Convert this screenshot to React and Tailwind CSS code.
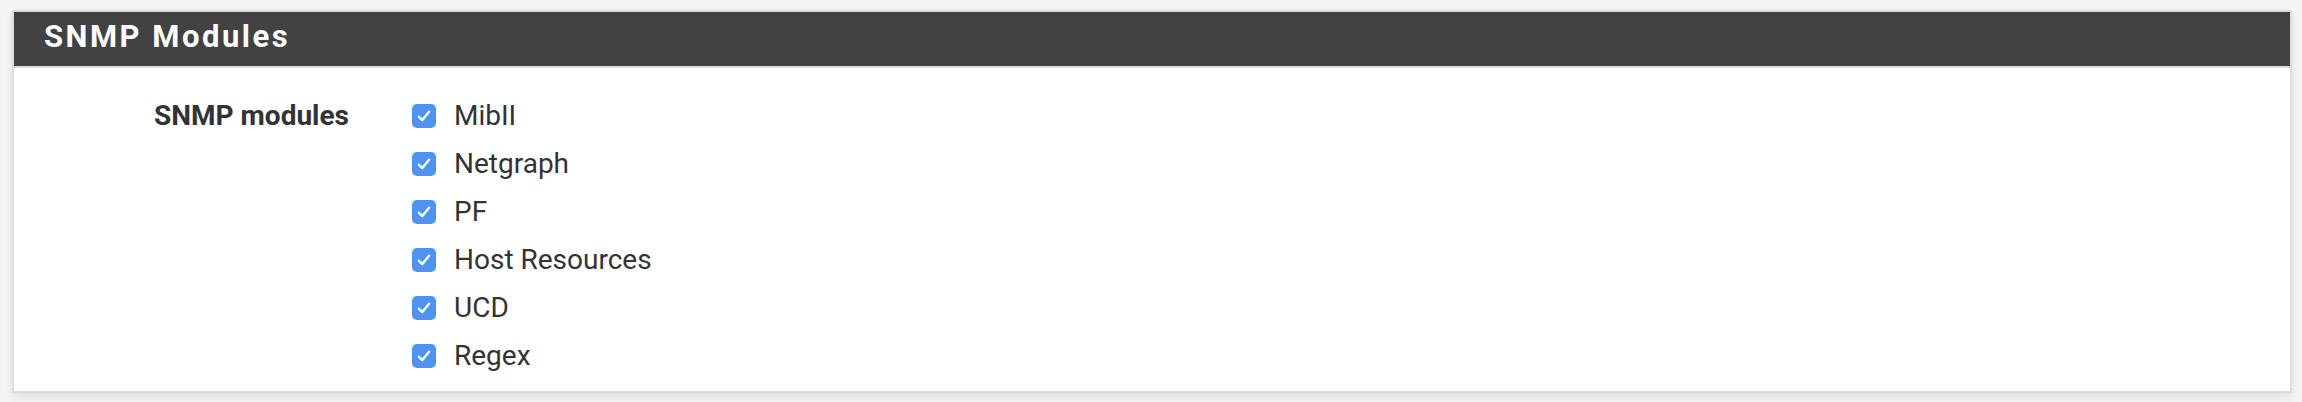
import React from "react";

const items = ["MibII", "Netgraph", "PF", "Host Resources", "UCD", "Regex"];

function Check() {
  return (
    <span className="flex h-[24px] w-[24px] shrink-0 items-center justify-center rounded-[5px] bg-[#4d93ef]">
      <svg width="24" height="24" viewBox="0 0 24 24" fill="none">
        <path d="M6.8 12.6 L10.2 16.2 L17 7.8" stroke="white" strokeWidth="2.4" strokeLinecap="round" strokeLinejoin="round" />
      </svg>
    </span>
  );
}

export default function App() {
  return (
    <div className="min-h-[402px] w-[2302px] bg-[#f3f3f3] pt-[10px] pl-[12px] pr-[10px]" style={{ fontFamily: "Roboto, 'Liberation Sans', sans-serif" }}>
      <div className="border-2 border-[#dcdcdc] bg-white shadow-[0_4px_8px_rgba(0,0,0,0.08)]">
        <div className="flex h-[56px] items-center border-b-2 border-[#dcdcdc] bg-[#424242] pl-[30px] pb-[3px]">
          <h2 className="text-[31px] font-bold tracking-[2.5px] text-white">SNMP Modules</h2>
        </div>
        <div className="flex pt-[24px] pb-[11px]">
          <div className="w-[335px] shrink-0 text-right">
            <div className="flex h-[48px] items-center justify-end text-[28px] font-bold text-[#333]">SNMP modules</div>
          </div>
          <div className="ml-[63px] flex flex-col">
            {items.map((it) => (
              <label key={it} className="flex h-[48px] items-center gap-[18px]">
                <Check />
                <span className="text-[28px] text-[#333]">{it}</span>
              </label>
            ))}
          </div>
        </div>
      </div>
    </div>
  );
}
